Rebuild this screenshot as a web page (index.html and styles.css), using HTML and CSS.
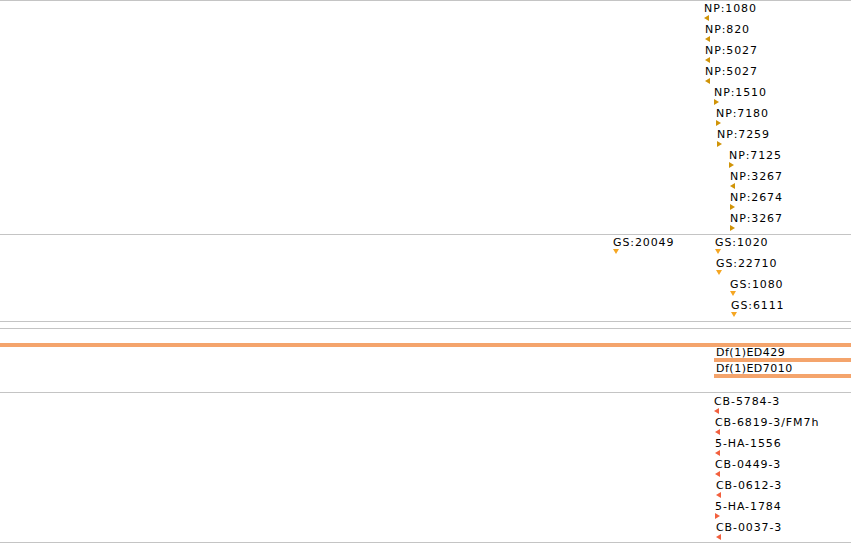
FILE: index.html
```html
<!DOCTYPE html>
<html lang="en">
<head>
  <meta charset="UTF-8">
  <title>Tracks</title>
  <link rel="stylesheet" href="styles.css">
</head>
<body>

<!-- NP track -->
<div class="track np-track">
  <div class="row"><div class="feat np" style="left:704px"><span class="label">NP:1080</span><i class="tri-l"></i></div></div>
  <div class="row"><div class="feat np" style="left:705px"><span class="label">NP:820</span><i class="tri-l"></i></div></div>
  <div class="row"><div class="feat np" style="left:705px"><span class="label">NP:5027</span><i class="tri-l"></i></div></div>
  <div class="row"><div class="feat np" style="left:705px"><span class="label">NP:5027</span><i class="tri-l"></i></div></div>
  <div class="row"><div class="feat np" style="left:714px"><span class="label">NP:1510</span><i class="tri-r"></i></div></div>
  <div class="row"><div class="feat np" style="left:716px"><span class="label">NP:7180</span><i class="tri-r"></i></div></div>
  <div class="row"><div class="feat np" style="left:717px"><span class="label">NP:7259</span><i class="tri-r"></i></div></div>
  <div class="row"><div class="feat np" style="left:729px"><span class="label">NP:7125</span><i class="tri-r"></i></div></div>
  <div class="row"><div class="feat np" style="left:730px"><span class="label">NP:3267</span><i class="tri-l"></i></div></div>
  <div class="row"><div class="feat np" style="left:730px"><span class="label">NP:2674</span><i class="tri-r"></i></div></div>
  <div class="row"><div class="feat np" style="left:730px"><span class="label">NP:3267</span><i class="tri-r"></i></div></div>
</div>

<!-- GS track -->
<div class="track gs-track">
  <div class="row">
    <div class="feat gs" style="left:613px"><span class="label">GS:20049</span><i class="tri-d"></i></div>
    <div class="feat gs" style="left:715px"><span class="label">GS:1020</span><i class="tri-d"></i></div>
  </div>
  <div class="row"><div class="feat gs" style="left:716px"><span class="label">GS:22710</span><i class="tri-d"></i></div></div>
  <div class="row"><div class="feat gs" style="left:730px"><span class="label">GS:1080</span><i class="tri-d"></i></div></div>
  <div class="row"><div class="feat gs" style="left:731px"><span class="label">GS:6111</span><i class="tri-d"></i></div></div>
</div>

<!-- empty track -->
<div class="track empty-track"></div>

<!-- Df track -->
<div class="track df-track">
  <div class="df-row">
    <div class="df" style="margin-left:0"><span class="df-label"></span><div class="bar"></div></div>
  </div>
  <div class="df-row">
    <div class="df" style="margin-left:714px"><span class="df-label">Df(1)ED429</span><div class="bar"></div></div>
  </div>
  <div class="df-row">
    <div class="df" style="margin-left:714px"><span class="df-label">Df(1)ED7010</span><div class="bar"></div></div>
  </div>
</div>

<!-- CB track -->
<div class="track cb-track">
  <div class="row"><div class="feat cb" style="left:714px"><span class="label">CB-5784-3</span><i class="tri-l"></i></div></div>
  <div class="row"><div class="feat cb" style="left:715px"><span class="label">CB-6819-3/FM7h</span><i class="tri-l"></i></div></div>
  <div class="row"><div class="feat cb" style="left:715px"><span class="label">5-HA-1556</span><i class="tri-l"></i></div></div>
  <div class="row"><div class="feat cb" style="left:715px"><span class="label">CB-0449-3</span><i class="tri-l"></i></div></div>
  <div class="row"><div class="feat cb" style="left:716px"><span class="label">CB-0612-3</span><i class="tri-l"></i></div></div>
  <div class="row"><div class="feat cb" style="left:715px"><span class="label">5-HA-1784</span><i class="tri-r"></i></div></div>
  <div class="row"><div class="feat cb" style="left:716px"><span class="label">CB-0037-3</span><i class="tri-l"></i></div></div>
</div>

</body>
</html>
```

FILE: styles.css
```css
body {
  margin: 0;
  background-color: #ffffff;
  color: #000;
  font-family: "DejaVu Sans", sans-serif;
  font-size: 11px;
  overflow: hidden;
}
.track {
  border-top: 1px solid #c4c4c4;
}
.np-track {
  padding-bottom: 2px;
}
.gs-track {
  padding-bottom: 2px;
}
.empty-track {
  height: 6px;
}
.cb-track {
  padding-top: 1px;
  padding-bottom: 1px;
  border-bottom: 1px solid #c4c4c4;
}
.row {
  position: relative;
  height: 21px;
}
.feat {
  position: absolute;
  top: 0;
}
.label {
  display: block;
  margin-top: 1px;
  line-height: 14px;
  height: 13px;
  letter-spacing: 0.9px;
  white-space: nowrap;
  color: #000;
}
.np { color: #d09408; }
.gs { color: #f5a623; }
.cb { color: #f2603e; }
.tri-l, .tri-r, .tri-d {
  display: block;
  width: 0;
  height: 0;
}
.tri-l {
  border-top: 3px solid transparent;
  border-bottom: 3px solid transparent;
  border-right: 5px solid currentColor;
}
.tri-r {
  border-top: 3px solid transparent;
  border-bottom: 3px solid transparent;
  border-left: 5px solid currentColor;
}
.tri-d {
  border-left: 3px solid transparent;
  border-right: 3px solid transparent;
  border-top: 5px solid currentColor;
}

/* Df track */
.df-track {
  padding-top: 3px;
  padding-bottom: 14px;
}
.df-row {
  height: 15px;
  display: flex;
  flex-direction: column;
  justify-content: flex-end;
}
.df-row:last-child {
  height: 16px;
}
.df-label {
  display: block;
  margin-left: 2px;
  line-height: 12px;
  height: 11px;
  letter-spacing: 0.5px;
  white-space: nowrap;
}
.bar {
  height: 4px;
  background-color: #f4a46c;
}
```
